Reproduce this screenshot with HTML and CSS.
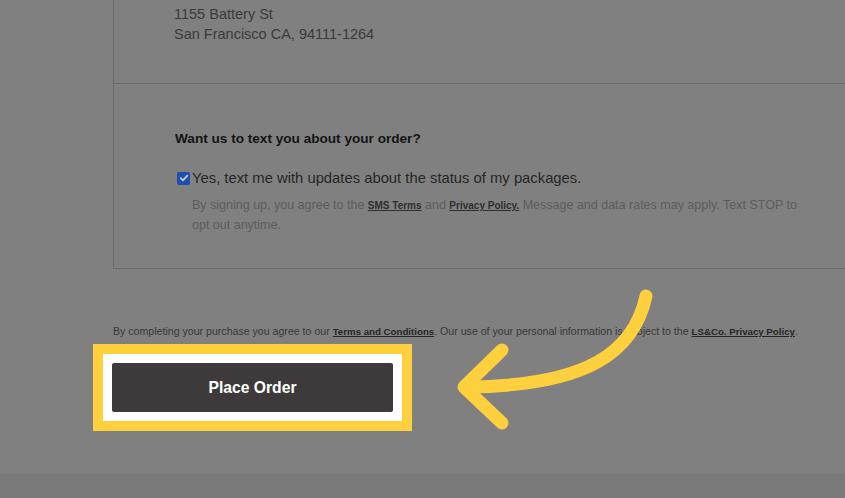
FILE: index.html
```html
<!DOCTYPE html>
<html lang="en">
<head>
  <meta charset="UTF-8" />
  <title>Checkout - Place Order</title>
  <link rel="stylesheet" href="styles.css">
</head>
<body>

<div class="page">
  <div class="card">
    <div class="section address">
      <div>1155 Battery St</div>
      <div>San Francisco CA, 94111-1264</div>
    </div>
    <div class="section sms">
      <div class="sms-title">Want us to text you about your order?</div>
      <label class="sms-check">
        <span class="box">
          <svg width="10" height="10" viewBox="0 0 10 10"><path d="M1.8 5.2 L4 7.3 L8.3 2.6" fill="none" stroke="#c8c8c8" stroke-width="1.8" stroke-linecap="round" stroke-linejoin="round"/></svg>
        </span>
        Yes, text me with updates about the status of my packages.
      </label>
      <p class="sms-legal">By signing up, you agree to the <a>SMS Terms</a> and <a>Privacy Policy.</a> Message and data rates may apply. Text STOP to opt out anytime.</p>
    </div>
  </div>

  <p class="terms">By completing your purchase you agree to our <a>Terms and Conditions</a>. Our use of your personal information is subject to the <a>LS&amp;Co. Privacy Policy</a>.</p>

  <div class="highlight">
    <div class="highlight-inner">
      <button class="place-order">Place Order</button>
    </div>
  </div>
</div>

<div class="bottom-strip"></div>

<!-- pointer arrow -->
<svg class="arrow" width="845" height="498" viewBox="0 0 845 498">
  <g fill="none" stroke="#ffd03d" stroke-width="13" stroke-linecap="round" stroke-linejoin="round">
    <path d="M646 296 C 634 352 588 386 466 387"/>
    <path d="M502 350 L464 387 L502 423"/>
  </g>
</svg>

</body>
</html>
```

FILE: styles.css
```css
* { box-sizing: border-box; margin: 0; padding: 0; }
body {
  font-family: 'Liberation Sans', Arial, sans-serif;
  background: #808080;
  width: 845px;
  height: 498px;
  overflow: hidden;
  position: relative;
}
.page {
  padding-left: 113px;
  height: 474px;
}
.card {
  border-left: 1px solid #6b6b6b;
  border-bottom: 1px solid #6b6b6b;
}
.section {
  padding-left: 60px;
}
.address {
  padding-top: 4px;
  padding-bottom: 39px;
  font-size: 14.5px;
  line-height: 20px;
  color: #3a3a3a;
  border-bottom: 1px solid #6b6b6b;
}
.sms {
  padding-top: 45px;
  padding-bottom: 33px;
}
.sms-title {
  font-size: 13.6px;
  line-height: 20px;
  font-weight: bold;
  color: #141414;
  margin-left: 1px;
}
.sms-check {
  display: flex;
  align-items: center;
  gap: 2px;
  margin-top: 19px;
  margin-left: 3px;
  font-size: 14.8px;
  line-height: 20px;
  color: #262626;
}
.box {
  width: 13px;
  height: 13px;
  border-radius: 2px;
  background: #1c4fae;
  display: flex;
  align-items: center;
  justify-content: center;
}
.sms-legal {
  margin-top: 7px;
  margin-left: 18px;
  max-width: 608px;
  font-size: 12.5px;
  line-height: 20px;
  color: #5c5c5c;
}
.sms-legal a {
  font-size: 10px;
  line-height: 1;
  font-weight: bold;
  color: #2e2e2e;
  text-decoration: underline;
}
.terms {
  margin-top: 55px;
  font-size: 10.6px;
  line-height: 14px;
  color: #383838;
}
.terms a {
  font-size: 9.7px;
  line-height: 1;
  color: #262626;
  font-weight: bold;
  text-decoration: underline;
}
.highlight {
  margin-top: 6px;
  margin-left: -20px;
  width: 319px;
  background: #ffd03d;
  padding: 10px;
}
.highlight-inner {
  background: #fff;
  padding: 9px;
}
.place-order {
  display: block;
  width: 281px;
  height: 49px;
  padding-top: 1px;
  border: none;
  border-radius: 2px;
  background: #3e3a3b;
  color: #fff;
  font-family: 'Liberation Sans', Arial, sans-serif;
  font-size: 15.7px;
  font-weight: bold;
}
.bottom-strip {
  height: 24px;
  background: #7a7a7a;
}
.arrow {
  position: absolute;
  left: 0;
  top: 0;
  pointer-events: none;
}
```
